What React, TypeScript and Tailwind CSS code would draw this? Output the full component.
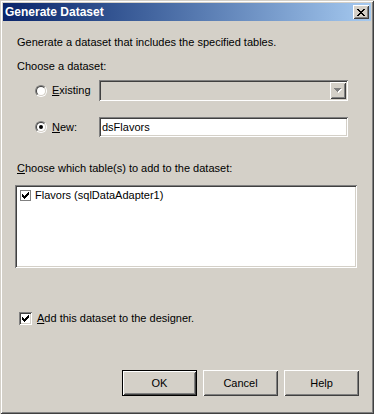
import React from 'react';

const sunken =
  'shadow-[inset_1px_1px_0_#808080,inset_-1px_-1px_0_#ffffff,inset_2px_2px_0_#404040,inset_-2px_-2px_0_#d4d0c8]';
const raised =
  'shadow-[inset_1px_1px_0_#ffffff,inset_-1px_-1px_0_#404040,inset_2px_2px_0_#d4d0c8,inset_-2px_-2px_0_#808080]';

function Radio({ checked }: { checked?: boolean }) {
  return (
    <div className="w-[12px] h-[12px] rounded-full border border-t-[#808080] border-l-[#808080] border-b-white border-r-white">
      <div className="w-full h-full rounded-full border border-t-[#404040] border-l-[#404040] border-b-[#d4d0c8] border-r-[#d4d0c8] bg-white flex items-center justify-center">
        {checked && <div className="w-[4px] h-[4px] rounded-full bg-black" />}
      </div>
    </div>
  );
}

function Check() {
  return (
    <svg width="7" height="7" viewBox="0 0 7 7" shapeRendering="crispEdges">
      <path d="M0 2h1v3h-1zM1 3h1v3h-1zM2 4h1v3h-1zM3 3h1v3h-1zM4 2h1v3h-1zM5 1h1v3h-1zM6 0h1v3h-1z" fill="#000" />
    </svg>
  );
}

function Button({ label, isDefault }: { label: string; isDefault?: boolean }) {
  return (
    <div className={`w-[75px] h-[26px] ${isDefault ? 'border border-black' : ''}`}>
      <div className={`w-full h-full bg-[#d4d0c8] ${raised} flex items-center justify-center text-[11px] text-black`}>
        {label}
      </div>
    </div>
  );
}

export default function App() {
  return (
    <div
      className="w-[374px] h-[414px] p-[3px] bg-[#d4d0c8] flex flex-col shadow-[inset_1px_1px_0_#d4d0c8,inset_-1px_-1px_0_#404040,inset_2px_2px_0_#ffffff,inset_-2px_-2px_0_#808080] text-black"
      style={{ fontFamily: '"Liberation Sans", Arial, sans-serif' }}
    >
      {/* title bar */}
      <div className="h-[18px] flex items-center justify-between pl-[2px] pr-[2px] bg-gradient-to-r from-[#0a246a] to-[#a6caf0]">
        <span className="text-white font-bold text-[12px] leading-[14px]">Generate Dataset</span>
        <div className={`w-[16px] h-[14px] bg-[#d4d0c8] ${raised} flex items-center justify-center`}>
          <svg width="8" height="7" viewBox="0 0 8 7" shapeRendering="crispEdges">
            <path d="M0 0h2v1h-2zM6 0h2v1h-2zM1 1h2v1h-2zM5 1h2v1h-2zM2 2h4v1h-4zM3 3h2v1h-2zM2 4h4v1h-4zM1 5h2v1h-2zM5 5h2v1h-2zM0 6h2v1h-2zM6 6h2v1h-2z" fill="#000" />
          </svg>
        </div>
      </div>

      <div className="flex-1 flex flex-col pl-[14px] text-[11px] leading-[13px]">
        <div className="mt-[15px] h-[13px]">Generate a dataset that includes the specified tables.</div>
        <div className="mt-[11px] h-[13px]">Choose a dataset:</div>

        <div className="mt-[7px] h-[21px] flex items-center">
          <div className="ml-[18px]">
            <Radio />
          </div>
          <span className="ml-[5px] w-[47px]">
            <span className="underline">E</span>xisting
          </span>
          <div className={`w-[249px] h-[21px] bg-[#d4d0c8] ${sunken} p-[2px] flex justify-end`}>
            <div className={`w-[16px] h-[17px] bg-[#d4d0c8] ${raised} flex items-center justify-center`}>
              <svg width="8" height="5" viewBox="0 0 8 5" shapeRendering="crispEdges">
                <path d="M1 1h7v1h-1v1h-1v1h-1v1h-1v-1h-1v-1h-1v-1h-1z" fill="#ffffff" />
                <path d="M0 0h7v1h-1v1h-1v1h-1v1h-1v-1h-1v-1h-1v-1h-1z" fill="#808080" />
              </svg>
            </div>
          </div>
        </div>

        <div className="mt-[16px] h-[20px] flex items-center">
          <div className="ml-[18px]">
            <Radio checked />
          </div>
          <span className="ml-[5px] w-[47px]">
            <span className="underline">N</span>ew:
          </span>
          <div className={`w-[249px] h-[20px] bg-white ${sunken} pl-[3px] flex items-center`}>dsFlavors</div>
        </div>

        <div className="mt-[25px] h-[13px]">
          <span className="underline">C</span>hoose which table(s) to add to the dataset:
        </div>

        <div className={`mt-[10px] ml-[-2px] w-[342px] h-[83px] bg-white ${sunken} pt-[4px] pl-[5px]`}>
          <div className="flex items-center h-[13px]">
            <div className="w-[11px] h-[11px] border border-[#808080] bg-white flex items-center justify-center">
              <Check />
            </div>
            <span className="ml-[4px]">Flavors (sqlDataAdapter1)</span>
          </div>
        </div>

        <div className="mt-[44px] h-[13px] flex items-center">
          <div className={`ml-[2px] w-[13px] h-[13px] bg-white ${sunken} flex items-center justify-center`}>
            <Check />
          </div>
          <span className="ml-[5px]">
            <span className="underline">A</span>dd this dataset to the designer.
          </span>
        </div>

        <div className="mt-[45px] flex justify-end gap-[6px] pr-[12px]">
          <Button label="OK" isDefault />
          <Button label="Cancel" />
          <Button label="Help" />
        </div>
      </div>
    </div>
  );
}
